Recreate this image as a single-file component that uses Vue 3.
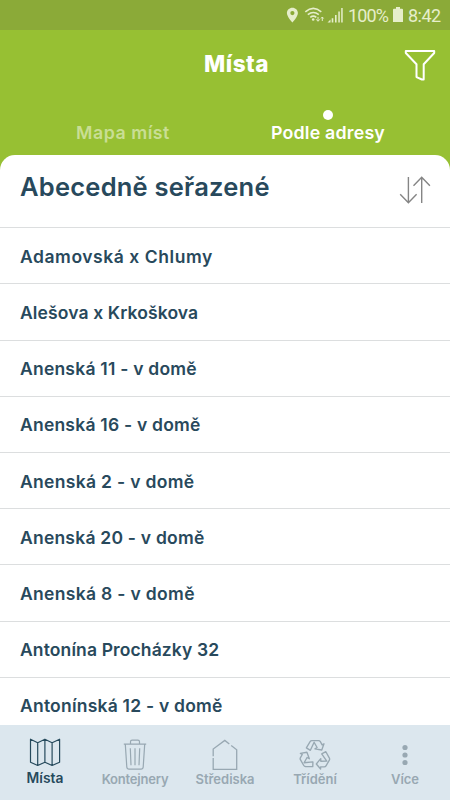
<script setup>
const places = [
  { name: 'Adamovská x Chlumy', fit: 'wide' },
  { name: 'Alešova x Krkoškova', fit: 'tight' },
  { name: 'Anenská 11 - v domě', fit: 'normal' },
  { name: 'Anenská 16 - v domě', fit: 'normal' },
  { name: 'Anenská 2 - v domě', fit: 'loose' },
  { name: 'Anenská 20 - v domě', fit: 'normal' },
  { name: 'Anenská 8 - v domě', fit: 'loose' },
  { name: 'Antonína Procházky 32', fit: 'tight' },
  { name: 'Antonínská 12 - v domě', fit: 'normal' },
]
const arrowAngles = [0, 120, 240]
</script>

<template>
  <div class="app">
    <div class="status">
      <svg class="status-icons" width="66" height="30" viewBox="284 0 66 30">
        <path fill="currentColor" fill-rule="evenodd" d="M292.4 7.8c-3.1 0-5.5 2.3-5.5 5.3 0 3.8 5.5 9.4 5.5 9.4s5.5-5.6 5.5-9.4c0-3-2.4-5.3-5.5-5.3zm0 3.2a2.1 2.1 0 1 1 0 4.2 2.1 2.1 0 0 1 0-4.2z" />
        <g fill="none" stroke="currentColor" stroke-width="1.6">
          <path d="M305.3 11.8q8-6.7 16 0M307.8 14.7q5.5-4.4 11 0M310.3 17.3q3-2.3 6 0" />
          <path stroke-width="1" d="M318 17v4M316.2 19.3l1.8 2 1.8-2M322.3 21v-4M321 18.5l1.3-1.5 1.3 1.5" />
        </g>
        <circle cx="313.2" cy="19.5" r="1.3" fill="currentColor" />
        <path fill="currentColor" d="M327.5 22.5l3-3v3zM331.7 18.3h1.6v4.2h-1.6zM335 15h1.6v7.5H335zM338.3 11.5h1.5v11h-1.5zM341.2 8h1.5v14.5h-1.5z" />
      </svg>
      <span class="percent">100%</span>
      <svg class="battery" width="10" height="16" viewBox="0 0 10 16">
        <path fill="currentColor" d="M3 0h4v1.8h2q1 0 1 1V15H0V2.8q0-1 1-1h2z" />
      </svg>
      <span class="clock">8:42</span>
    </div>

    <header class="header">
      <div class="title-row">
        <h1>Místa</h1>
        <svg class="filter" width="32" height="32" viewBox="404 49 32 32" fill="none" stroke="#fff" stroke-width="2" stroke-linejoin="round" stroke-linecap="round">
          <path d="M405.8 51h28.4v2l-10.5 11.3v15.2h-1.8l-5.4-2.4V64.3L405.8 53z" />
        </svg>
      </div>
      <nav class="tabs">
        <div class="tab inactive"><span class="tab-label">Mapa míst</span></div>
        <div class="tab active"><i class="dot"></i><span class="tab-label">Podle adresy</span></div>
      </nav>
    </header>

    <main class="sheet">
      <div class="sheet-head">
        <h2>Abecedně seřazené</h2>
        <svg width="32" height="30" viewBox="399 175 32 30" fill="none" stroke="#858585" stroke-width="1.4">
          <path d="M408.4 177v26M400.2 194.2l8.2 8.6 8.2-8.6M421.7 203v-26M413.5 185.8l8.2-8.6 8.2 8.6" />
        </svg>
      </div>
      <ul class="list">
        <li v-for="place in places" :key="place.name">
          <span :class="place.fit">{{ place.name }}</span>
        </li>
      </ul>
    </main>

    <nav class="bottom">
      <div class="item current">
        <svg width="34" height="34" viewBox="28 737 34 34" fill="none" stroke="currentColor" stroke-width="1.2" stroke-linejoin="round">
          <path d="M30.5 739.2l7.2 3.5 7.2-3.5 7.2 3.5 7.5-3.5v23l-7.5 3.3-7.2-3.3-7.2 3.3-7.2-3.3zM37.7 742.7v22.8M44.9 739.2v23M52.1 742.7v22.8" />
        </svg>
        <span>Místa</span>
      </div>
      <div class="item">
        <svg width="34" height="34" viewBox="118 737 34 34" fill="none" stroke="currentColor" stroke-width="1.2" stroke-linejoin="round">
          <path d="M123.8 744.2h22.4M130.5 744v-2.2q0-1.6 1.6-1.6h5.8q1.6 0 1.6 1.6v2.2M125.3 744.4l1.5 22.6q.2 2.2 2.2 2.2h12q2 0 2.2-2.2l1.5-22.6M130.3 748.2l.7 17M135 748.2v17M139.7 748.2l-.7 17" />
        </svg>
        <span class="kontejnery">Kontejnery</span>
      </div>
      <div class="item">
        <svg width="34" height="34" viewBox="208 737 34 34" fill="none" stroke="currentColor" stroke-width="1.3">
          <path d="M213.2 756.3v-7.2l11.6-8.7 4.5 3.5M231.2 745.5l5.5 4.2v19.6h-23.5v-11.3" />
        </svg>
        <span>Střediska</span>
      </div>
      <div class="item">
        <svg width="34" height="34" viewBox="-17 -18.4 34 34" fill="none" stroke="currentColor" stroke-width="1.5" stroke-linejoin="round">
          <path
            v-for="angle in arrowAngles"
            :key="angle"
            :transform="`rotate(${angle}) scale(.89)`"
            d="M-9.7-8.5l4.2-7q.7-1.1 2-1.1H4q1.3 0 2 1.2l2 3.5 2.1-1.2-2.5 7-7.7-1.3 2.5-1.5L-1-14.7l-4.2 9z"
          />
        </svg>
        <span>Třídění</span>
      </div>
      <div class="item">
        <svg width="34" height="34" viewBox="388 737 34 34" fill="currentColor">
          <circle cx="405" cy="747.5" r="2.6" /><circle cx="405" cy="755" r="2.6" /><circle cx="405" cy="762.5" r="2.6" />
        </svg>
        <span>Více</span>
      </div>
    </nav>
  </div>
</template>

<style>
body { margin: 0; }
</style>

<style scoped>
.app {
  width: 450px; height: 800px; overflow: hidden;
  display: flex; flex-direction: column;
  background: #97c033; color: #28495c;
  font-family: Inter, "Open Sans", sans-serif;
}
.status {
  height: 30px; flex: none; box-sizing: border-box; padding-right: 10px;
  display: flex; align-items: center; justify-content: flex-end;
  background: #8baa38; color: #e6eecb;
  font-family: Roboto, sans-serif; font-size: 18px; line-height: 31px;
}
.percent { width: 40px; margin-left: -2px; letter-spacing: -0.9px; white-space: nowrap; }
.battery { margin: 0 5px 0 5px; }
.clock { width: 32px; letter-spacing: -0.5px; white-space: nowrap; }
.header { height: 125px; flex: none; color: #fff; }
.title-row { height: 70px; display: grid; grid-template-columns: 1fr auto 1fr; align-items: center; }
h1 { grid-column: 2; margin: 0 0 3px 23px; font-size: 22.5px; line-height: 30px; font-weight: 800; letter-spacing: 0.5px; }
.filter { justify-self: end; margin-right: 14px; }
.tabs { display: flex; padding: 8px 20px 0; }
.tab { flex: 1; display: flex; flex-direction: column; align-items: center; height: 47px; }
.tab-label { font-size: 17.8px; font-weight: 600; line-height: 26px; letter-spacing: 0.2px; white-space: nowrap; }
.active .tab-label { padding-left: 1px; }
.inactive { color: #c9de94; padding-top: 12px; box-sizing: border-box; }
.inactive .tab-label { letter-spacing: 0.5px; padding-left: 1px; }
.dot { width: 10px; height: 10px; border-radius: 50%; background: #fff; margin: 2px 0 0; }
.sheet { flex: 1; min-height: 0; overflow: hidden; background: #fff; border-radius: 15px 15px 0 0; }
.sheet-head {
  height: 72.25px; box-sizing: border-box; padding: 0 19px 3px 20px;
  display: flex; justify-content: space-between; align-items: center;
}
h2 { margin: 0 0 5px; font-size: 25.5px; font-weight: 600; line-height: 36px; letter-spacing: 0.23px; white-space: nowrap; }
.list { list-style: none; margin: 0; padding: 0; }
.list li {
  height: 56.2px; box-sizing: border-box; border-top: 1px solid #dcdedf;
  padding: 1px 20px 0; display: flex; align-items: center;
  font-size: 17.5px; font-weight: 600; white-space: nowrap;
}
.wide { letter-spacing: 0.55px; }
.loose { letter-spacing: 0.32px; }
.normal { letter-spacing: 0.22px; }
.tight { letter-spacing: 0.12px; }
.bottom { flex: none; height: 75px; display: flex; background: #dce7ee; }
.item {
  flex: 1; display: flex; flex-direction: column; align-items: center; padding-top: 12px;
  color: #98a8b2; font-size: 13px; font-weight: 600; line-height: 17px;
}
.current { color: #264a5c; font-size: 13.8px; line-height: 15px; }
.kontejnery { letter-spacing: -0.2px; }
</style>
